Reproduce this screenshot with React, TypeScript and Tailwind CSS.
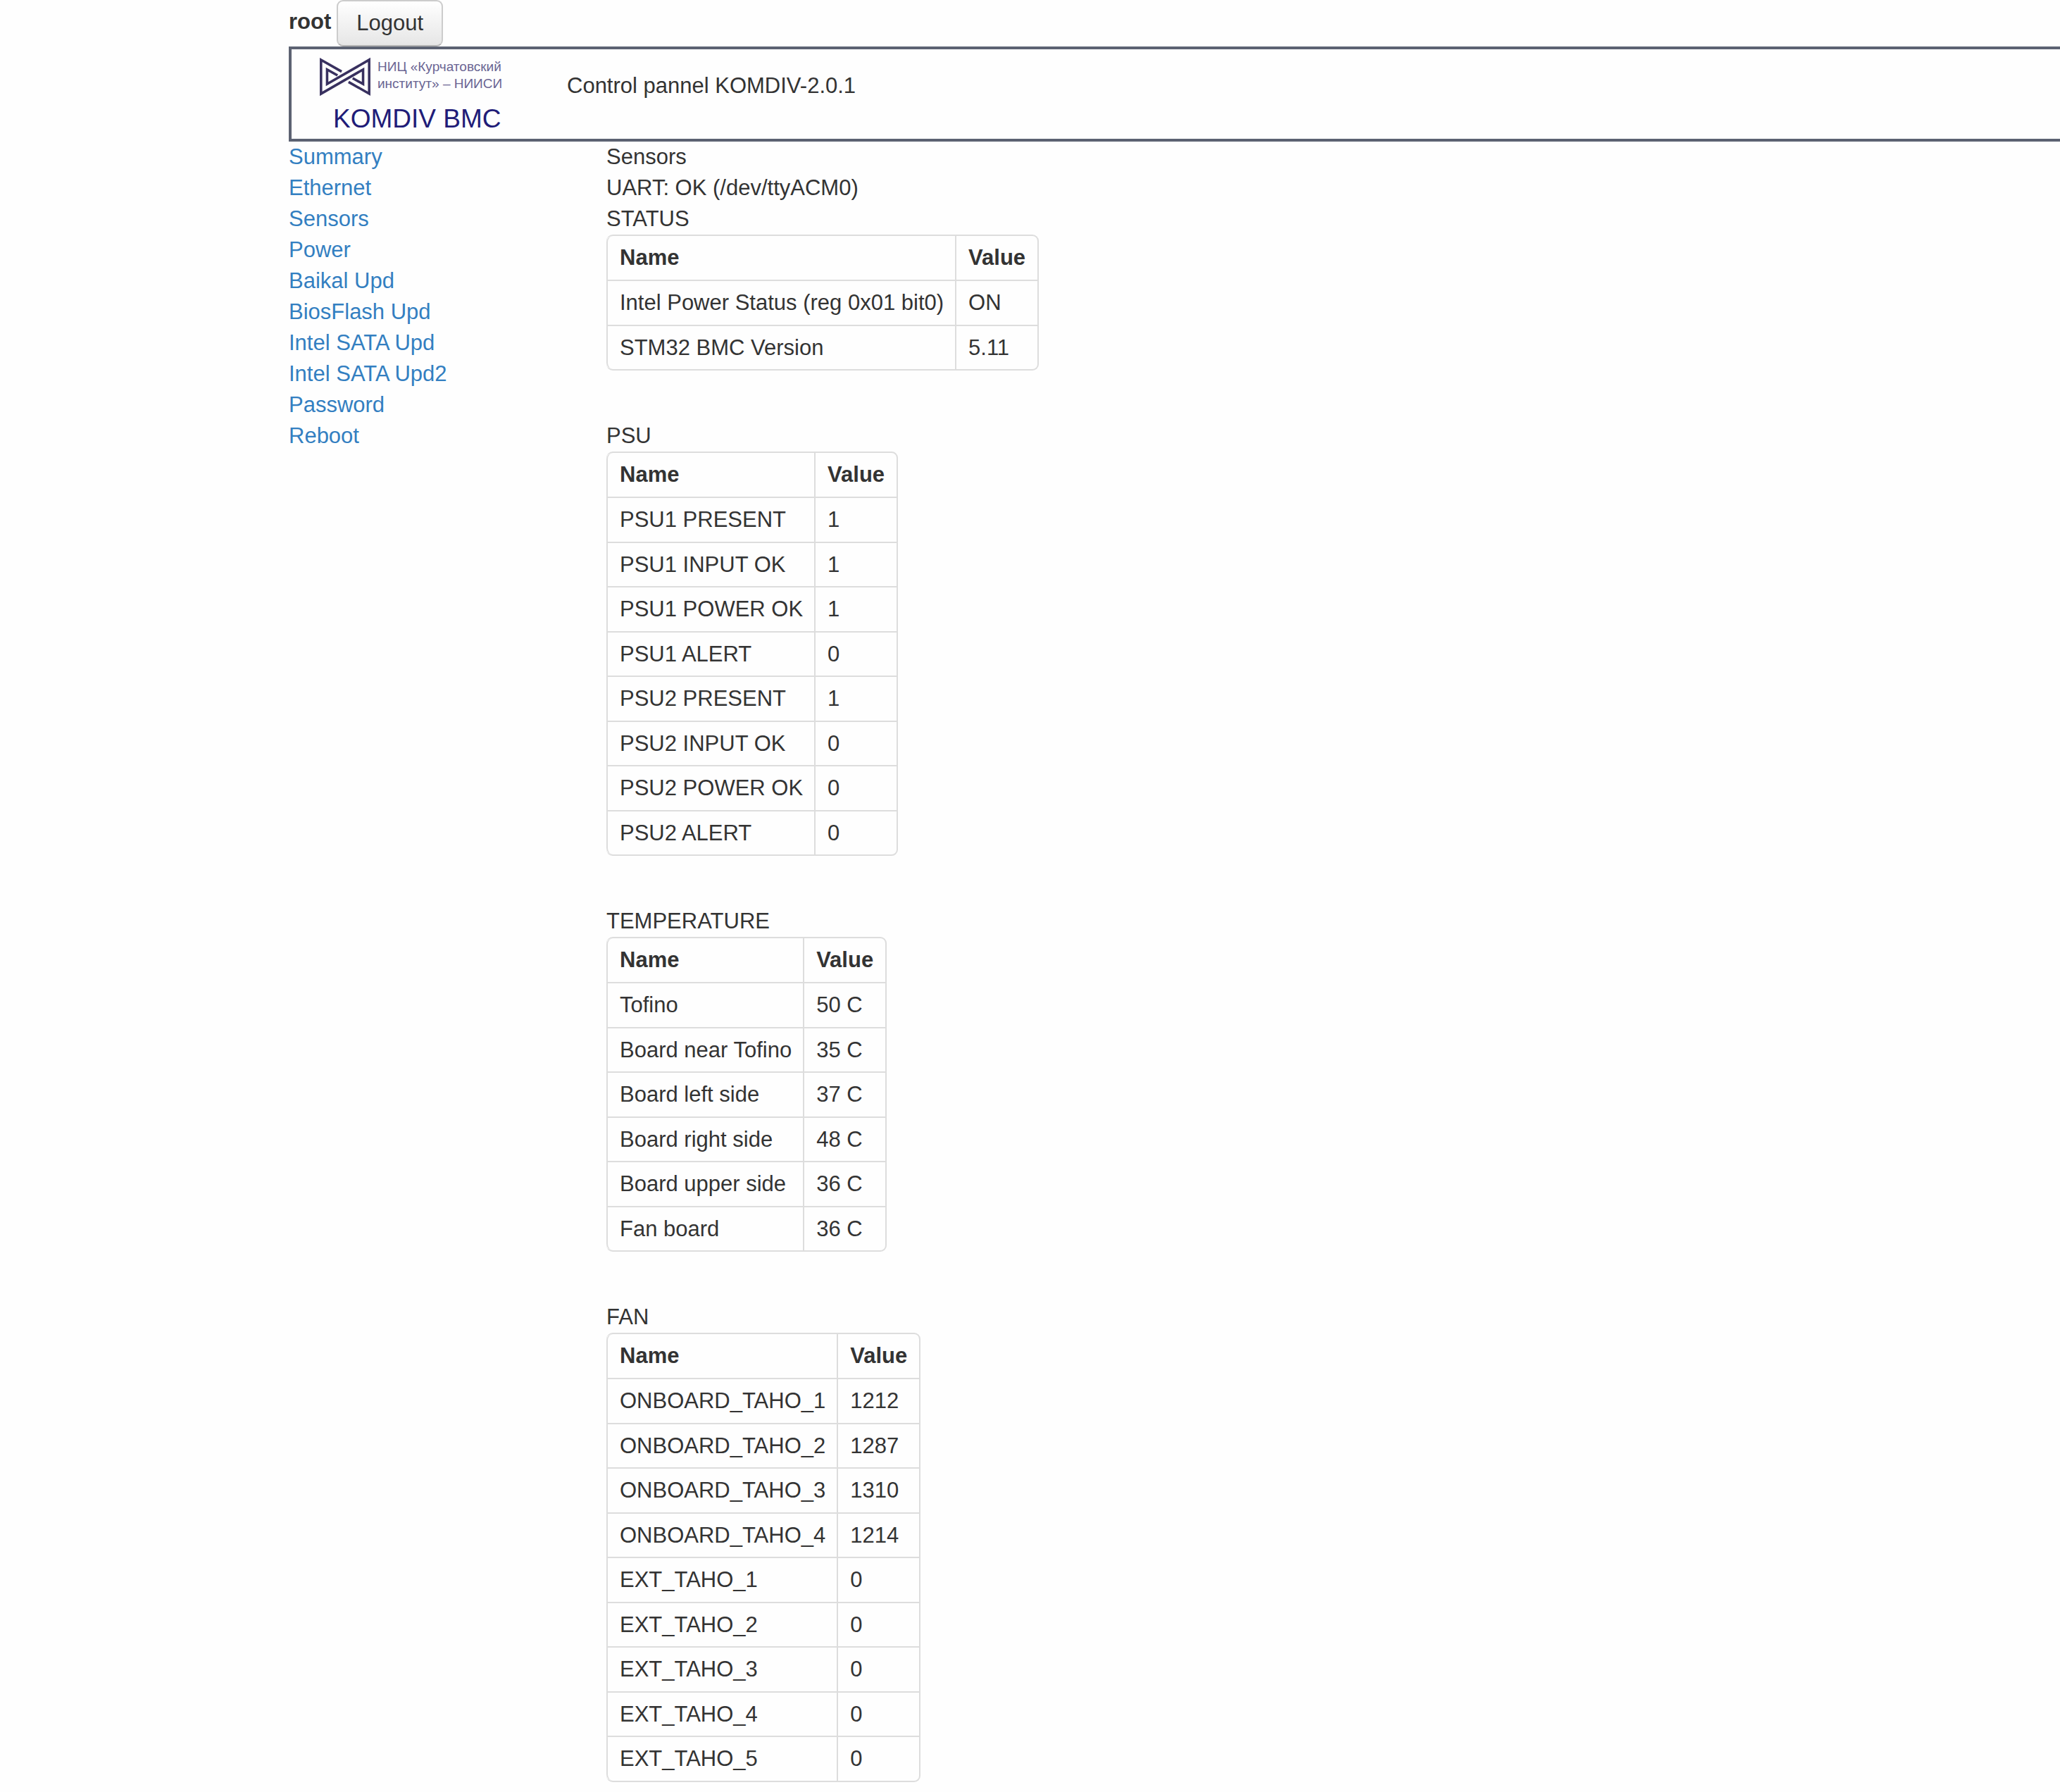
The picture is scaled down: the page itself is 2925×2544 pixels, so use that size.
import React from "react";

type Row = [string, string];

const links = [
  "Summary",
  "Ethernet",
  "Sensors",
  "Power",
  "Baikal Upd",
  "BiosFlash Upd",
  "Intel SATA Upd",
  "Intel SATA Upd2",
  "Password",
  "Reboot",
];

const groups: { title: string; rows: Row[] }[] = [
  {
    title: "STATUS",
    rows: [
      ["Intel Power Status (reg 0x01 bit0)", "ON"],
      ["STM32 BMC Version", "5.11"],
    ],
  },
  {
    title: "PSU",
    rows: [
      ["PSU1 PRESENT", "1"],
      ["PSU1 INPUT OK", "1"],
      ["PSU1 POWER OK", "1"],
      ["PSU1 ALERT", "0"],
      ["PSU2 PRESENT", "1"],
      ["PSU2 INPUT OK", "0"],
      ["PSU2 POWER OK", "0"],
      ["PSU2 ALERT", "0"],
    ],
  },
  {
    title: "TEMPERATURE",
    rows: [
      ["Tofino", "50 C"],
      ["Board near Tofino", "35 C"],
      ["Board left side", "37 C"],
      ["Board right side", "48 C"],
      ["Board upper side", "36 C"],
      ["Fan board", "36 C"],
    ],
  },
  {
    title: "FAN",
    rows: [
      ["ONBOARD_TAHO_1", "1212"],
      ["ONBOARD_TAHO_2", "1287"],
      ["ONBOARD_TAHO_3", "1310"],
      ["ONBOARD_TAHO_4", "1214"],
      ["EXT_TAHO_1", "0"],
      ["EXT_TAHO_2", "0"],
      ["EXT_TAHO_3", "0"],
      ["EXT_TAHO_4", "0"],
      ["EXT_TAHO_5", "0"],
    ],
  },
];

// Two interlocked ribbons, each the other turned by half a circle.
function LogoMark() {
  return (
    <svg className="h-14 w-[74px] shrink-0" viewBox="0 0 74 57" fill="none" stroke="#38305f" strokeWidth="3.6" aria-hidden="true">
      <path d="M32 21 L2.200 4 V53 L63 18 V39 L48 30.500" />
      <path d="M42 36 L71.800 53 V4 L11 39 V18 L26 26.500" />
    </svg>
  );
}

function SensorTable({ title, rows }: { title: string; rows: Row[] }) {
  return (
    <section aria-label={title}>
      <h2>{title}</h2>
      <table className="border-separate border-spacing-0 rounded-[9px] border-2 border-l-0 border-[#ddd] text-left">
        <thead>
          <tr>
            <th scope="col" className="rounded-tl-[9px] border-l-2 border-[#ddd] py-[9px] pr-4 pl-[17px] font-bold">Name</th>
            <th scope="col" className="border-l-2 border-[#ddd] py-[9px] pr-[17px] pl-[17px] font-bold">Value</th>
          </tr>
        </thead>
        <tbody>
          {rows.map(([name, value]) => (
            <tr key={name} className="group">
              <td className="border-t-2 border-l-2 border-[#ddd] pt-[9px] pr-4 pb-[9px] pl-[17px] group-last:rounded-bl-[9px] group-even:pb-2">{name}</td>
              <td className="border-t-2 border-l-2 border-[#ddd] pt-[9px] pr-[17px] pb-[9px] pl-[17px] group-even:pb-2">{value}</td>
            </tr>
          ))}
        </tbody>
      </table>
    </section>
  );
}

export default function App() {
  return (
    <div className="min-h-screen overflow-x-hidden bg-[#fefefe] pl-[410px] font-['Liberation_Sans',Arial,sans-serif] text-[31px] leading-[44px] text-[#333]">
      <div className="flex h-[66px] items-center gap-2">
        <span className="pb-1 font-bold">root</span>
        <button
          type="button"
          className="h-[66px] rounded-[9px] border-2 border-[#ccc] border-b-[#b3b3b3] bg-linear-to-b from-white to-[#e6e6e6] px-[26px]"
        >
          Logout
        </button>
      </div>
      <header className="flex h-[135px] border-4 border-r-0 border-[#5c6272]">
        <div className="ml-[39px] flex w-[352px] flex-col pt-[11px]">
          <div className="flex items-center gap-[9px]">
            <LogoMark />
            <p className="pb-1 text-[19px] leading-6 whitespace-nowrap text-[#6a6593]">
              НИЦ «Курчатовский
              <br />
              институт» – НИИСИ
            </p>
          </div>
          <p className="mt-2 ml-5 text-[37px] leading-[48px] text-[#211c78]">KOMDIV BMC</p>
        </div>
        <h1 className="pt-[30px]">Control pannel KOMDIV-2.0.1</h1>
      </header>
      <div className="flex">
        <nav className="w-[451px] shrink-0">
          <ul>
            {links.map((label) => (
              <li key={label}>
                <a href="#" className="text-[#337fc1]">{label}</a>
              </li>
            ))}
          </ul>
        </nav>
        <main className="min-w-0 flex-1">
          <p>Sensors</p>
          <p>UART: OK (/dev/ttyACM0)</p>
          <div className="flex flex-col items-start gap-[71px]">
            {groups.map((group) => (
              <SensorTable key={group.title} title={group.title} rows={group.rows} />
            ))}
          </div>
        </main>
      </div>
    </div>
  );
}
